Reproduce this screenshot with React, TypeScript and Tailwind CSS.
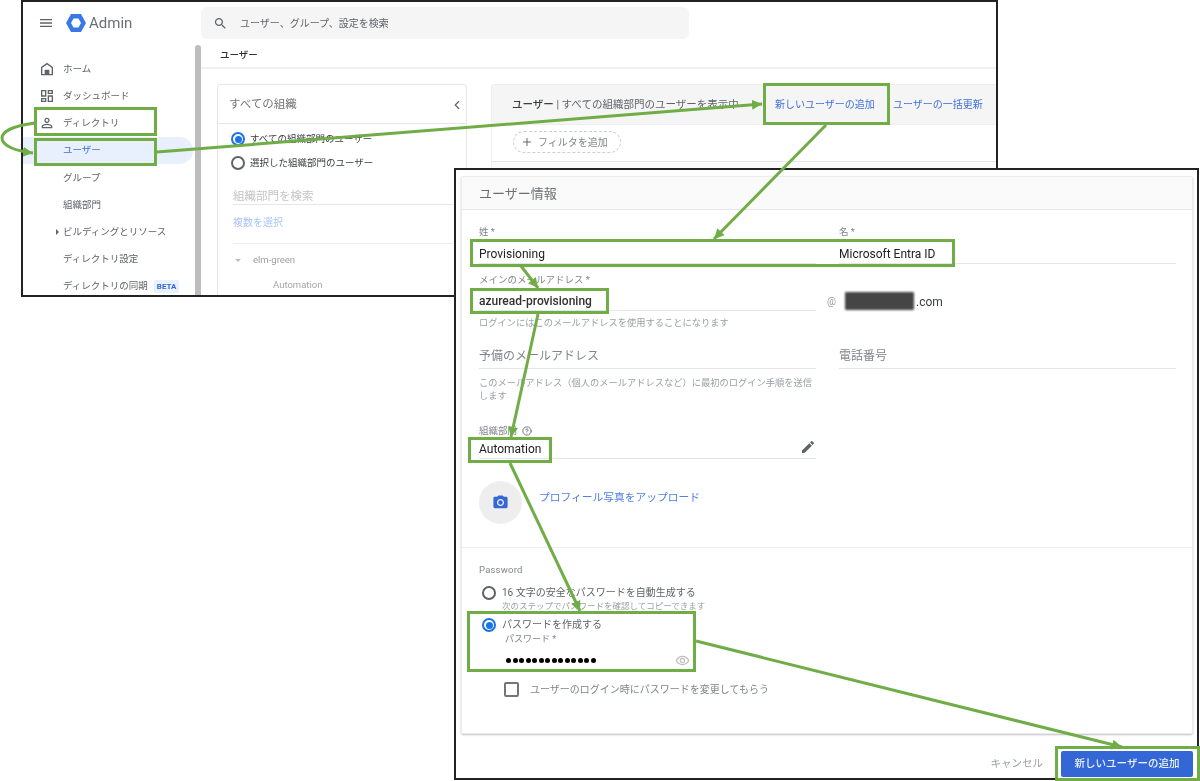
import { ChevronLeft, CircleHelp, Plus } from "lucide-react";
import type { ReactNode } from "react";

const font = "font-['Roboto','Noto_Sans_CJK_JP',sans-serif]";

function MdIcon({ d, className }: { d: string; className: string }) {
  return (
    <svg viewBox="0 0 24 24" className={className} fill="currentColor">
      <path d={d} />
    </svg>
  );
}

const icons = {
  menu: "M3 18h18v-2H3v2zm0-5h18v-2H3v2zm0-7v2h18V6H3z",
  search:
    "M15.5 14h-.79l-.28-.27C15.41 12.59 16 11.11 16 9.5 16 5.91 13.09 3 9.5 3S3 5.91 3 9.5 5.91 16 9.5 16c1.61 0 3.09-.59 4.23-1.57l.27.28v.79l5 4.99L20.49 19l-4.99-5zm-6 0C7.01 14 5 11.99 5 9.5S7.01 5 9.5 5 14 7.01 14 9.5 11.99 14 9.5 14z",
  home: "M12 2.5 3 9v12.5h18V9L12 2.5zm0 2.6L19 10v9.5h-3.5V13h-7v6.5H5V10l7-4.9z",
  dashboard:
    "M19 5v2h-4V5h4M9 5v6H5V5h4m10 8v6h-4v-6h4M9 17v2H5v-2h4M21 3h-8v6h8V3zM11 3H3v10h8V3zm10 8h-8v10h8V11zM11 15H3v6h8v-6z",
  person:
    "M12 5.9c1.16 0 2.1.94 2.1 2.1s-.94 2.1-2.1 2.1S9.9 9.16 9.9 8s.94-2.1 2.1-2.1m0 9c2.97 0 6.1 1.46 6.1 2.1v1.1H5.9V17c0-.64 3.13-2.1 6.1-2.1M12 4C9.79 4 8 5.79 8 8s1.79 4 4 4 4-1.79 4-4-1.79-4-4-4zm0 9c-2.67 0-8 1.34-8 4v3h16v-3c0-2.66-5.33-4-8-4z",
  camera:
    "M12 15.2a3.2 3.2 0 1 0 0-6.4 3.2 3.2 0 0 0 0 6.4zM9 2 7.17 4H4c-1.1 0-2 .9-2 2v12c0 1.1.9 2 2 2h16c1.1 0 2-.9 2-2V6c0-1.1-.9-2-2-2h-3.17L15 2H9zm3 15c-2.76 0-5-2.24-5-5s2.24-5 5-5 5 2.24 5 5-2.24 5-5 5z",
  pencil:
    "M3 17.25V21h3.75L17.81 9.94l-3.75-3.75L3 17.25zM20.71 7.04c.39-.39.39-1.02 0-1.41l-2.34-2.34c-.39-.39-1.02-.39-1.41 0l-1.83 1.83 3.75 3.75 1.83-1.83z",
  eye: "M12 6.5c3.79 0 7.17 2.13 8.82 5.5-1.65 3.37-5.02 5.5-8.82 5.5S4.83 15.37 3.18 12C4.83 8.63 8.21 6.5 12 6.5m0-2C7 4.5 2.73 7.61 1 12c1.73 4.39 6 7.5 11 7.5s9.27-3.11 11-7.5c-1.73-4.39-6-7.5-11-7.5zm0 5a2.5 2.5 0 1 1 0 5 2.5 2.5 0 0 1 0-5m0-2c-2.48 0-4.5 2.02-4.5 4.5s2.02 4.5 4.5 4.5 4.5-2.02 4.5-4.5-2.02-4.5-4.5-4.5z",
};

function Radio({ checked }: { checked?: boolean }) {
  return (
    <span
      className={
        checked
          ? "flex h-[14px] w-[14px] shrink-0 items-center justify-center rounded-full border-2 border-[#1a73e8]"
          : "flex h-[14px] w-[14px] shrink-0 items-center justify-center rounded-full border-2 border-[#5f6368]"
      }
    >
      {checked && <span className="h-[7px] w-[7px] rounded-full bg-[#1a73e8]" />}
    </span>
  );
}

function NavRow({ icon, label, active, badge, caret }: { icon?: string; label: string; active?: boolean; badge?: boolean; caret?: boolean }) {
  return (
    <div className={active ? "flex h-[27px] items-center rounded-r-full bg-[#e8f0fe] text-[#3f6fd8]" : "flex h-[27px] items-center text-[#5f6368]"}>
      <span className="relative h-[16px] w-[40px] shrink-0 pl-[16px]">
        {icon && <MdIcon d={icon} className="h-[16px] w-[16px] text-[#5f6368]" />}
        {caret && <span className="absolute left-[33px] top-[5px] border-y-[3px] border-l-[3px] border-y-transparent border-l-[#5f6368]" />}
      </span>
      <span className="text-[9.5px] leading-[12px]">{label}</span>
      {badge && <span className="ml-[6px] rounded-[2px] bg-[#e8f0fe] px-[3px] text-[8px] font-bold leading-[13px] text-[#3367d6]">BETA</span>}
    </div>
  );
}

function Field({ children, className }: { children: ReactNode; className: string }) {
  return <div className={"flex items-end border-b border-[#e6e6e6] " + className}>{children}</div>;
}

function AdminWindow() {
  return (
    <section className="absolute left-[21px] top-0 flex h-[297px] w-[977px] flex-col overflow-hidden border-2 border-[#222] bg-white blur-[0.35px]">
      <header className="flex h-[43px] shrink-0 items-start pt-[5px]">
        <div className="flex h-[32px] w-[178px] items-center">
          <MdIcon d={icons.menu} className="ml-[15px] h-[16px] w-[16px] text-[#5f6368]" />
          <svg viewBox="0 0 20 18" className="ml-[12px] h-[18px] w-[20px]">
            <path d="M5 0h10l5 9-5 9H5L0 9z" fill="#3b78e7" />
            <path d="M7.5 4.5h5L15 9l-2.5 4.5h-5L5 9z" fill="#fff" />
          </svg>
          <span className="ml-[3px] mt-[1px] text-[15px] text-[#6b6f73]">Admin</span>
        </div>
        <div className="flex h-[32px] w-[488px] items-center rounded-[6px] bg-[#f5f5f5] pl-[12px] text-[10px] text-[#5f6368]">
          <MdIcon d={icons.search} className="h-[15px] w-[15px]" />
          <span className="ml-[12px]">ユーザー、グループ、設定を検索</span>
        </div>
      </header>

      <div className="flex min-h-0 flex-1">
        <nav className="w-[170px] shrink-0 pt-[10.5px]">
          <NavRow icon={icons.home} label="ホーム" />
          <NavRow icon={icons.dashboard} label="ダッシュボード" />
          <NavRow icon={icons.person} label="ディレクトリ" />
          <NavRow label="ユーザー" active />
          <div className="pt-[1px]">
            <NavRow label="グループ" />
            <NavRow label="組織部門" />
            <NavRow label="ビルディングとリソース" caret />
            <NavRow label="ディレクトリ設定" />
            <NavRow label="ディレクトリの同期" badge />
          </div>
        </nav>
        <div className="ml-[2px] w-[6px] shrink-0 rounded-t-full bg-[#bdbdbd]" />

        <main className="flex min-w-0 flex-1 flex-col">
          <div className="h-[24px] shrink-0 border-b-2 border-[#f1f1f1] pl-[19px] pt-[3px] text-[9.5px] font-medium leading-[14px] text-[#303030]">ユーザー</div>
          <div className="flex flex-1 gap-[24px] pl-[16px] pt-[15px]">
            <div className="h-[240px] w-[250px] shrink-0 rounded-[3px] border border-[#e6e6e6]">
              <div className="flex h-[39px] items-center justify-between border-b border-[#e6e6e6] pl-[11px] pr-[2px] pt-[1px] text-[11.5px] text-[#757575]">
                すべての組織
                <ChevronLeft className="h-[14px] w-[14px] text-[#5f6368]" />
              </div>
              <div className="pl-[13px] pt-[3px] text-[9.5px] text-[#3c4043]">
                <div className="flex h-[24px] items-center gap-[5px]">
                  <Radio checked />
                  すべての組織部門のユーザー
                </div>
                <div className="flex h-[24px] items-center gap-[5px]">
                  <Radio />
                  選択した組織部門のユーザー
                </div>
              </div>
              <div className="pl-[15px]">
                <div className="mt-[14px] h-[16px] w-[220px] border-b border-[#e6e6e6] text-[11.5px] leading-[15px] text-[#c4c4c4]">組織部門を検索</div>
                <div className="mt-[10px] text-[10px] leading-[16px] text-[#a8c4f5]">複数を選択</div>
                <div className="mt-[12px] w-[220px] border-t border-[#eeeeee]" />
                <div className="mt-[10px] flex items-center text-[9.5px] leading-[12px] text-[#9e9e9e]">
                  <span className="ml-[2px] mr-[12px] border-x-[3px] border-t-[3px] border-x-transparent border-t-[#bdbdbd]" />
                  elm-green
                </div>
                <div className="mt-[13px] pl-[40px] text-[9.5px] leading-[12px] text-[#a6a6a6]">Automation</div>
              </div>
            </div>

            <div className="min-w-0 flex-1 rounded-tl-[3px] border-l border-t border-[#eeeeee]">
              <div className="flex h-[39px] items-center bg-[#f5f5f5] pl-[20px] text-[10.5px] text-[#5f6368]">
                <span className="w-[263px] whitespace-nowrap">
                  <span className="font-medium text-[#3c4043]">ユーザー</span> | すべての組織部門のユーザーを表示中
                </span>
                <span className="w-[118px] whitespace-nowrap text-[10px] text-[#3f6fd8]">新しいユーザーの追加</span>
                <span className="whitespace-nowrap text-[10px] text-[#3f6fd8]">ユーザーの一括更新</span>
              </div>
              <div className="h-[37px] border-t border-[#eeeeee] pl-[21px] pt-[6px]">
                <div className="flex h-[22px] w-[108px] items-center rounded-full border border-dashed border-[#cfcfcf] pl-[7px] text-[10px] text-[#80868b]">
                  <Plus className="h-[12px] w-[12px] text-[#5f6368]" />
                  <span className="ml-[5px]">フィルタを追加</span>
                </div>
              </div>
              <div className="h-[20px] border-t border-[#e6e6e6] bg-[#fafafa]" />
            </div>
          </div>
        </main>
      </div>
    </section>
  );
}

function UserFormWindow() {
  return (
    <section className="absolute left-[454px] top-[168px] flex h-[612px] w-[745px] flex-col border-2 border-[#222] bg-white pl-[5px] pr-[4px] pt-[6px] blur-[0.35px]">
      <div className="h-[558px] shrink-0 rounded-[2px] border border-[#ececec] shadow-[0_1px_2px_rgba(0,0,0,0.25)]">
        <div className="flex h-[33px] items-center border-b border-[#e8e8e8] bg-[#fafafa] pl-[17px] pt-[2px] text-[13px] text-[#6b6f73]">ユーザー情報</div>

        <div className="h-[337px] pl-[17px] pt-[16px]">
          <div className="grid grid-cols-[337px_337px] gap-x-[23px]">
            <div>
              <div className="text-[9.5px] leading-[12px] text-[#80868b]">姓 *</div>
              <Field className="h-[26px] pb-[1px]">
                <span className="text-[12px] leading-[16px] text-[#202124]">Provisioning</span>
              </Field>
            </div>
            <div>
              <div className="text-[9.5px] leading-[12px] text-[#80868b]">名 *</div>
              <Field className="h-[26px] pb-[1px]">
                <span className="text-[12px] leading-[16px] text-[#202124]">Microsoft Entra ID</span>
              </Field>
            </div>
          </div>

          <div className="mt-[10px] grid grid-cols-[337px_337px] gap-x-[23px]">
            <div>
              <div className="text-[9.5px] leading-[12px] text-[#80868b]">メインのメールアドレス *</div>
              <Field className="h-[25px] pb-[1px]">
                <span className="text-[12px] font-medium leading-[16px] text-[#303030]">azuread-provisioning</span>
              </Field>
              <div className="mt-[6px] text-[9.25px] leading-[12px] text-[#9aa0a6]">ログインにはこのメールアドレスを使用することになります</div>
            </div>
            <div className="-ml-[12px] flex h-[37px] items-end pb-[1px] text-[12px] leading-[16px] text-[#3c4043]">
              <span className="mr-[9px] text-[10px] text-[#9e9e9e]">@</span>
              <span className="relative w-[71px]">
                <span className="block h-[18px] w-[69px] rounded-[1px] bg-[#454545] blur-[1px]" />
              </span>
              .com
            </div>
          </div>

          <div className="mt-[14px] grid grid-cols-[337px_337px] gap-x-[23px]">
            <div>
              <Field className="h-[26px] pb-[4px]">
                <span className="text-[12px] leading-[16px] text-[#80868b]">予備のメールアドレス</span>
              </Field>
              <div className="mt-[7px] text-[9.25px] leading-[13px] text-[#9aa0a6]">このメールアドレス（個人のメールアドレスなど）に最初のログイン手順を送信します</div>
            </div>
            <Field className="h-[26px] pb-[4px]">
              <span className="text-[12px] leading-[16px] text-[#80868b]">電話番号</span>
            </Field>
          </div>

          <div className="mt-[23px] w-[337px]">
            <div className="flex items-center text-[9.5px] leading-[12px] text-[#80868b]">
              組織部門 <CircleHelp className="ml-[5px] h-[10px] w-[10px] text-[#5f6368]" />
            </div>
            <Field className="h-[22px] justify-between pb-[1px]">
              <span className="text-[12px] leading-[16px] text-[#202124]">Automation</span>
              <MdIcon d={icons.pencil} className="mb-[2px] h-[16px] w-[16px] text-[#5f6368]" />
            </Field>
          </div>

          <div className="mt-[22px] flex items-start gap-[17px]">
            <div className="flex h-[43px] w-[43px] items-center justify-center rounded-full bg-[#eeeeee]">
              <MdIcon d={icons.camera} className="h-[17px] w-[17px] text-[#3367d6]" />
            </div>
            <span className="mt-[9px] text-[10.75px] leading-[16px] text-[#4f7fe0]">プロフィール写真をアップロード</span>
          </div>
        </div>

        <div className="border-t border-[#eeeeee] pl-[17px] pt-[16px]">
          <div className="text-[9.5px] leading-[12px] tracking-[0.2px] text-[#80868b]">Password</div>
          <div className="mt-[11px] flex items-start gap-[6px] pl-[3px]">
            <span className="mt-[-1px]"><Radio /></span>
            <div>
              <div className="text-[10px] leading-[12px] text-[#5f6368]">16 文字の安全なパスワードを自動生成する</div>
              <div className="mt-[1px] text-[8.5px] leading-[12px] text-[#9aa0a6]">次のステップでパスワードを確認してコピーできます</div>
            </div>
          </div>
          <div className="mt-[6px] flex items-center gap-[6px] pl-[3px]">
            <Radio checked />
            <span className="text-[10px] leading-[12px] text-[#5f6368]">パスワードを作成する</span>
          </div>
          <div className="ml-[26px] mt-[1px] text-[9px] leading-[12px] text-[#80868b]">パスワード *</div>
          <div className="ml-[27px] mt-[7px] flex h-[16px] w-[184px] items-center justify-between">
            <div className="flex gap-[1.5px]">
              {Array.from({ length: 14 }).map((_, i) => (
                <span key={i} className="h-[5px] w-[5px] rounded-full bg-black" />
              ))}
            </div>
            <MdIcon d={icons.eye} className="h-[15px] w-[15px] text-[#bdbdbd]" />
          </div>
          <div className="ml-[25px] mt-[14px] flex items-center">
            <span className="h-[15px] w-[15px] rounded-[2px] border-2 border-[#757575]" />
            <span className="ml-[11px] text-[10px] leading-[14px] text-[#80868b]">ユーザーのログイン時にパスワードを変更してもらう</span>
          </div>
        </div>
      </div>

      <div className="flex flex-1 items-start justify-end pt-[17px]">
        <span className="mr-[18px] mt-[5px] text-[10.5px] leading-[16px] text-[#9aa0a6]">キャンセル</span>
        <button className="h-[26px] w-[132px] rounded-[2px] bg-[#3367d6] text-[10.5px] font-medium text-[#eaf0fd]">新しいユーザーの追加</button>
      </div>
    </section>
  );
}

const greenBox = "absolute border-[3px] border-[#70ad47]";

export default function App() {
  return (
    <div className={"relative h-[781px] w-[1200px] overflow-hidden bg-white " + font}>
      <AdminWindow />
      <UserFormWindow />

      {/* Green callouts */}
      <div className={greenBox + " left-[34px] top-[107px] h-[29px] w-[123px]"} />
      <div className={greenBox + " left-[34px] top-[138px] h-[28px] w-[123px]"} />
      <div className={greenBox + " left-[763px] top-[83px] h-[42px] w-[127px]"} />
      <div className={greenBox + " left-[470px] top-[239px] h-[28px] w-[485px]"} />
      <div className={greenBox + " left-[470px] top-[288px] h-[26px] w-[139px]"} />
      <div className={greenBox + " left-[468px] top-[437px] h-[26px] w-[84px]"} />
      <div className={greenBox + " left-[467px] top-[611px] h-[61px] w-[229px]"} />
      <div className={greenBox + " left-[1055px] top-[746px] h-[35px] w-[145px]"} />

      <svg className="pointer-events-none absolute left-0 top-0 h-[781px] w-[1200px]" viewBox="0 0 1200 781" fill="none" stroke="#70ad47" strokeWidth="3">
        <defs>
          <marker id="head" markerUnits="userSpaceOnUse" markerWidth="12" markerHeight="12" refX="10" refY="5" orient="auto">
            <path d="M0 0 10 5 0 10z" fill="#70ad47" stroke="none" />
          </marker>
        </defs>
        <path d="M35 123C12 126 2 132 2 138 2 146 16 151 33 153" markerEnd="url(#head)" />
        <path d="M157 152 762 104" markerEnd="url(#head)" />
        <path d="M826 125 714 239" markerEnd="url(#head)" />
        <path d="M521 266 538 288" markerEnd="url(#head)" />
        <path d="M538 314 511 437" markerEnd="url(#head)" />
        <path d="M510 463 580 611" markerEnd="url(#head)" />
        <path d="M696 641 1122 747" markerEnd="url(#head)" />
      </svg>
    </div>
  );
}
